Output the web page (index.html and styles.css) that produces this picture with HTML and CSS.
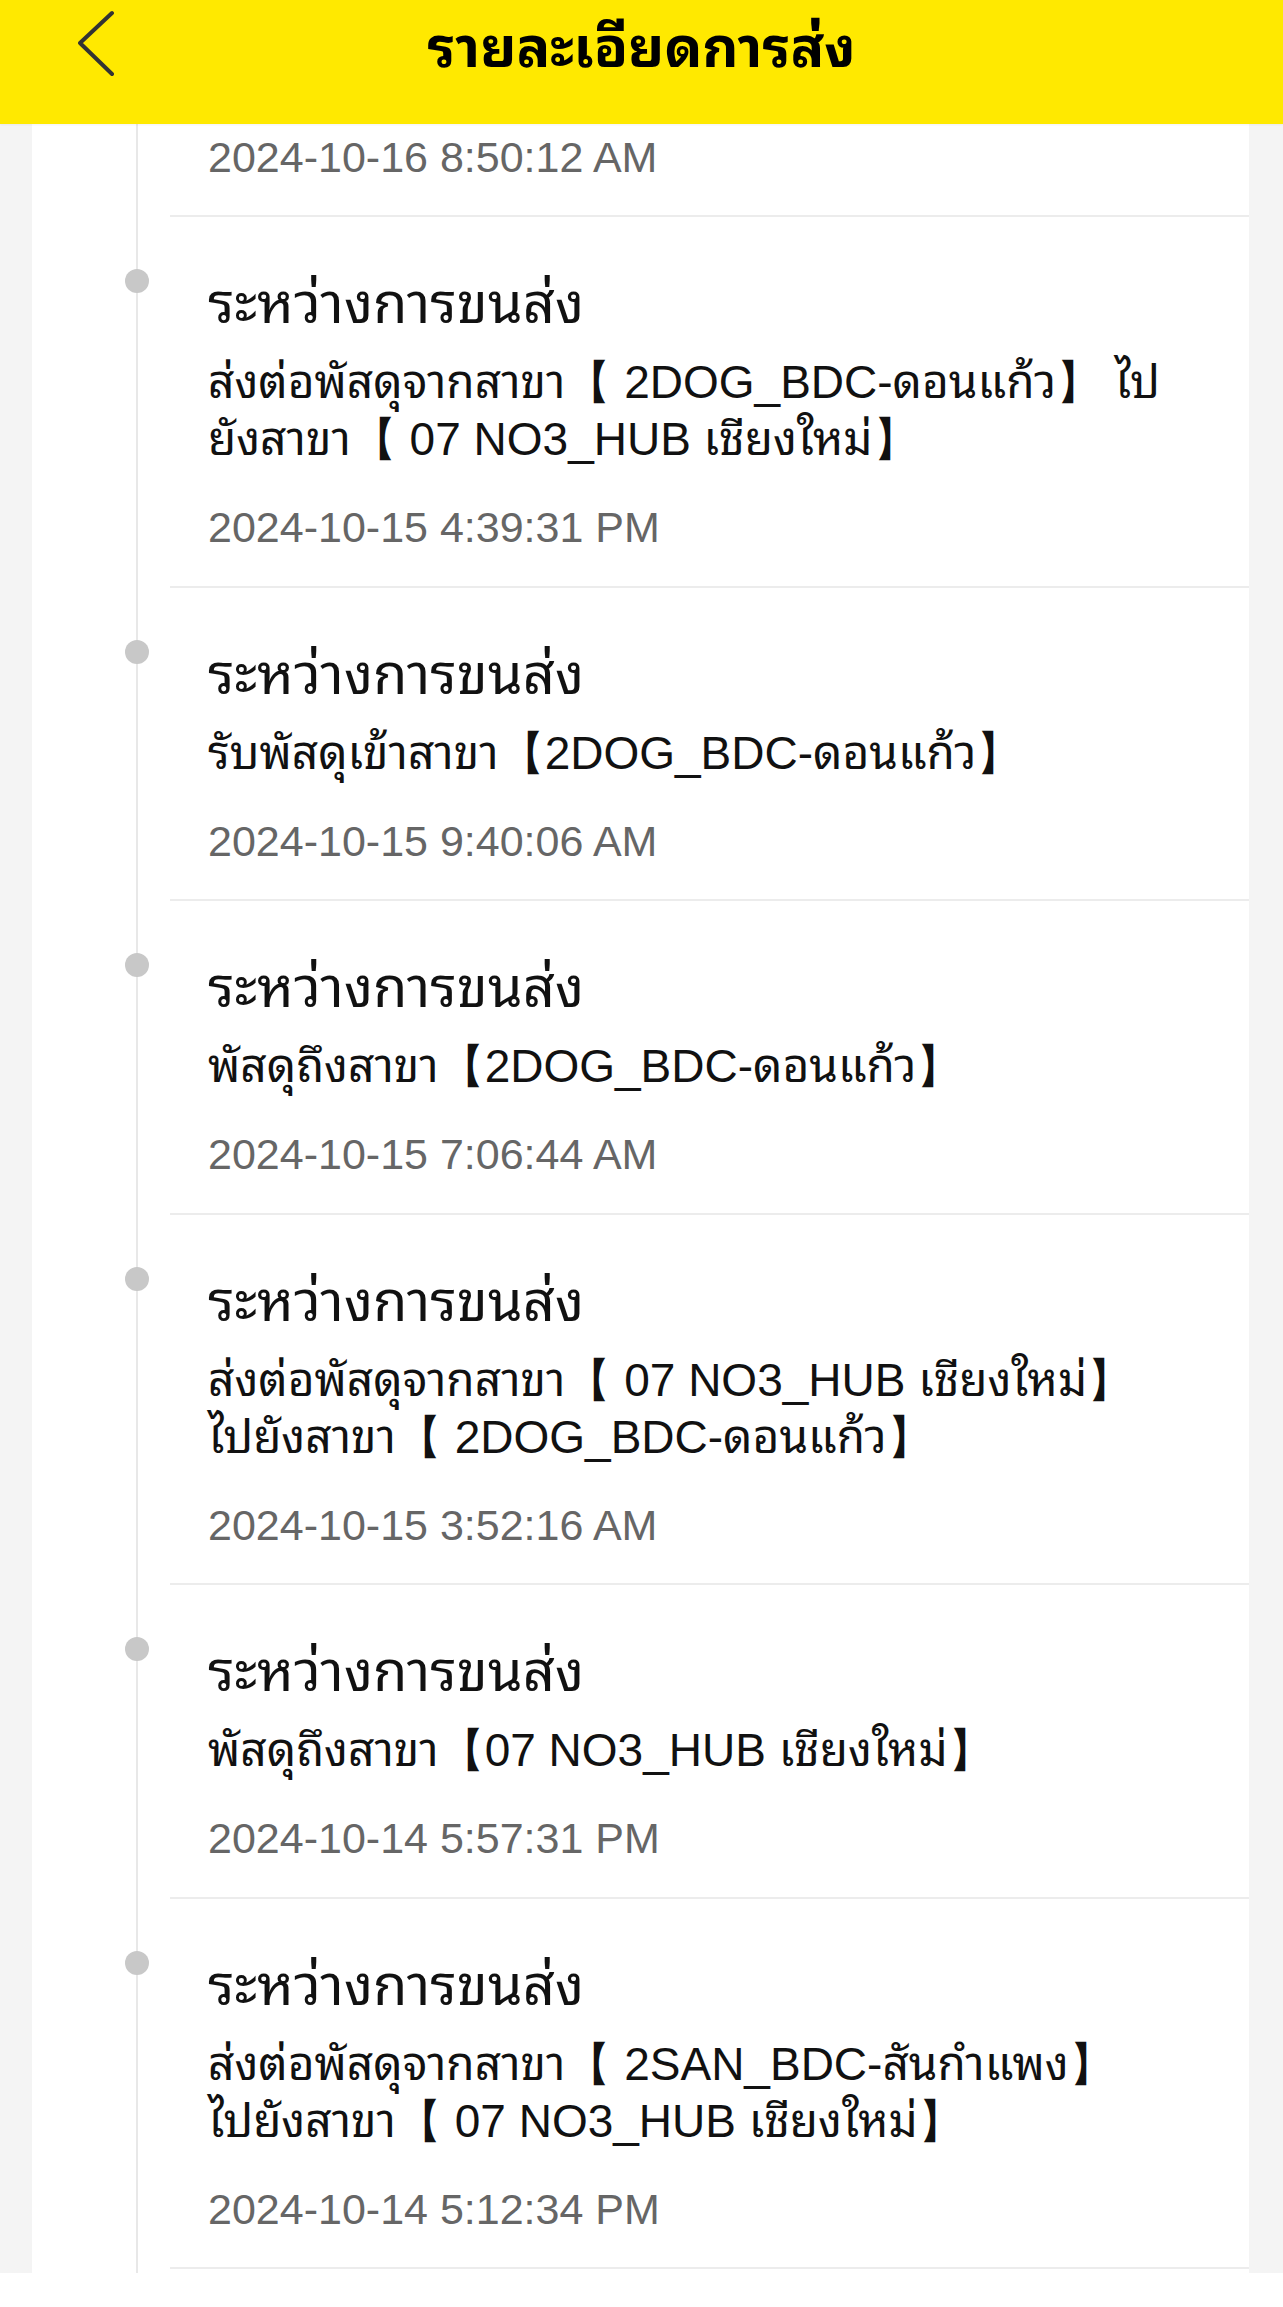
FILE: index.html
```html
<!DOCTYPE html>
<html lang="th">
<head>
  <meta charset="UTF-8" />
  <meta name="viewport" content="width=device-width, initial-scale=1.0"/>
  <title>รายละเอียดการส่ง</title>
  <link rel="stylesheet" href="styles.css">
</head>
<body>
  <header>
    <a class="back" href="#">
      <svg width="40" height="70" viewBox="0 0 40 70"><polyline points="34,5 2,35 34,66" /></svg>
    </a>
    <h1>รายละเอียดการส่ง</h1>
  </header>

  <main>
    <div class="card">
      <ul class="timeline">
        <li class="item item-cut">
          <div class="date">2024-10-16 8:50:12 AM</div>
        </li>
        <li class="item">
          <div class="status">ระหว่างการขนส่ง</div>
          <div class="desc">ส่งต่อพัสดุจากสาขา【 2DOG_BDC-ดอนแก้ว】 ไป<br>ยังสาขา【 07 NO3_HUB เชียงใหม่】</div>
          <div class="date">2024-10-15 4:39:31 PM</div>
        </li>
        <li class="item">
          <div class="status">ระหว่างการขนส่ง</div>
          <div class="desc">รับพัสดุเข้าสาขา【2DOG_BDC-ดอนแก้ว】</div>
          <div class="date">2024-10-15 9:40:06 AM</div>
        </li>
        <li class="item">
          <div class="status">ระหว่างการขนส่ง</div>
          <div class="desc">พัสดุถึงสาขา【2DOG_BDC-ดอนแก้ว】</div>
          <div class="date">2024-10-15 7:06:44 AM</div>
        </li>
        <li class="item">
          <div class="status">ระหว่างการขนส่ง</div>
          <div class="desc">ส่งต่อพัสดุจากสาขา【 07 NO3_HUB เชียงใหม่】<br>ไปยังสาขา【 2DOG_BDC-ดอนแก้ว】</div>
          <div class="date">2024-10-15 3:52:16 AM</div>
        </li>
        <li class="item">
          <div class="status">ระหว่างการขนส่ง</div>
          <div class="desc">พัสดุถึงสาขา【07 NO3_HUB เชียงใหม่】</div>
          <div class="date">2024-10-14 5:57:31 PM</div>
        </li>
        <li class="item">
          <div class="status">ระหว่างการขนส่ง</div>
          <div class="desc">ส่งต่อพัสดุจากสาขา【 2SAN_BDC-สันกำแพง】<br>ไปยังสาขา【 07 NO3_HUB เชียงใหม่】</div>
          <div class="date">2024-10-14 5:12:34 PM</div>
        </li>
      </ul>
    </div>
  </main>

  <footer></footer>
</body>
</html>
```

FILE: styles.css
```css
body {
  font-family: 'Liberation Sans', 'Noto Sans Thai Looped', 'Loma', 'Noto Sans Thai', 'Noto Sans', sans-serif;
  background: #f4f4f4;
  margin: 0;
  padding: 0;
  color: #111;
}
header {
  position: relative;
  height: 124px;
  background: #ffe900;
  display: flex;
  justify-content: center;
  box-shadow: 0 1px 2px rgba(0, 0, 0, 0.05);
}
header h1 {
  margin: 0;
  height: 96px;
  line-height: 96px;
  font-size: 56px;
  font-weight: bold;
  color: #000;
}
.back {
  position: absolute;
  left: 78px;
  top: 8px;
}
.back svg {
  display: block;
}
.back polyline {
  fill: none;
  stroke: #333;
  stroke-width: 4;
  stroke-linecap: round;
  stroke-linejoin: round;
}
main {
  height: 2149px;
  overflow: hidden;
}
.card {
  background: #fff;
  margin: 0 34px 0 32px;
  height: 100%;
}
.timeline {
  list-style: none;
  margin: 0 0 0 104px;
  padding: 0;
  border-left: 2px solid #e8e8e8;
  height: 100%;
}
.item {
  position: relative;
  margin-left: 32px;
  padding: 57px 20px 29.5px 38px;
  border-bottom: 2px solid #ececec;
}
.item::before {
  content: '';
  position: absolute;
  left: -45px;
  top: 52px;
  width: 24px;
  height: 24px;
  border-radius: 50%;
  background: #c8c8c8;
}
.item-cut {
  padding-top: 4.5px;
}
.item-cut::before {
  display: none;
}
.status {
  font-size: 56px;
  line-height: 60px;
}
.desc {
  margin-top: 20px;
  font-size: 46px;
  line-height: 57px;
}
.date {
  margin-top: 31px;
  font-size: 43px;
  line-height: 57px;
  color: #666;
}
.item-cut .date {
  margin-top: 0;
}
footer {
  height: 34px;
  background: #fff;
}
```
